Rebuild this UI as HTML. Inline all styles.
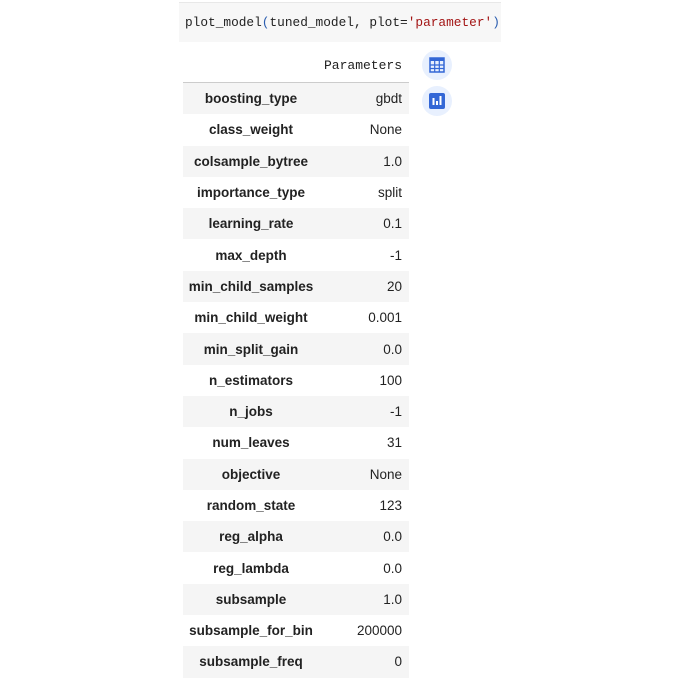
<!DOCTYPE html>
<html><head><style>
body{margin:0;width:680px;height:683px;background:#fff;position:relative;overflow:hidden;font-family:"Liberation Sans",Arial,sans-serif}
.code{position:absolute;left:179px;top:2px;width:322px;height:40px;background:#f7f7f7;border-top:1px solid #e8e8e8;font-family:"Liberation Mono",monospace;font-size:12.8px;line-height:40px;padding-left:6px;box-sizing:border-box;color:#222;white-space:nowrap}
.b{color:#2a5db0}.s{color:#a31515}
table{position:absolute;left:183px;top:48px;width:226px;border-collapse:collapse;font-size:13.5px;color:#222}
th{height:32px;font-family:"Liberation Mono",monospace;font-weight:normal;text-align:right;padding-right:7px;border-bottom:1px solid #ccc;font-size:13px}
td{height:31.3px;padding:0}
td.k{font-weight:bold;text-align:center;width:136px}
td.v{text-align:right;padding-right:7px}
tr:nth-child(even) td{background:#f5f5f5}
.ic{position:absolute;left:422px;width:30px;height:30px;border-radius:50%;background:#e8f0fe}
</style></head><body>
<div class="code">plot_model<span class="b">(</span>tuned_model, plot=<span class="s">'parameter'</span><span class="b">)</span></div>
<div class="ic" style="top:50px"><svg width="30" height="30"><rect x="8" y="8" width="14" height="14" fill="none" stroke="#3367d6" stroke-width="1.5"/><rect x="8" y="8" width="14" height="3" fill="#3367d6"/><path d="M8 15h14M8 18.5h14M12.7 11v11M17.3 11v11" stroke="#3367d6" stroke-width="1.2"/></svg></div>
<div class="ic" style="top:86px"><svg width="30" height="30"><rect x="7" y="7" width="16" height="16" rx="2" fill="#3367d6"/><path d="M11.5 12v7M15 15v4M18.5 10v9" stroke="#fff" stroke-width="2"/></svg></div>
<table>
<tr><th></th><th>Parameters</th></tr>
<tr><td class="k">boosting_type</td><td class="v">gbdt</td></tr>
<tr><td class="k">class_weight</td><td class="v">None</td></tr>
<tr><td class="k">colsample_bytree</td><td class="v">1.0</td></tr>
<tr><td class="k">importance_type</td><td class="v">split</td></tr>
<tr><td class="k">learning_rate</td><td class="v">0.1</td></tr>
<tr><td class="k">max_depth</td><td class="v">-1</td></tr>
<tr><td class="k">min_child_samples</td><td class="v">20</td></tr>
<tr><td class="k">min_child_weight</td><td class="v">0.001</td></tr>
<tr><td class="k">min_split_gain</td><td class="v">0.0</td></tr>
<tr><td class="k">n_estimators</td><td class="v">100</td></tr>
<tr><td class="k">n_jobs</td><td class="v">-1</td></tr>
<tr><td class="k">num_leaves</td><td class="v">31</td></tr>
<tr><td class="k">objective</td><td class="v">None</td></tr>
<tr><td class="k">random_state</td><td class="v">123</td></tr>
<tr><td class="k">reg_alpha</td><td class="v">0.0</td></tr>
<tr><td class="k">reg_lambda</td><td class="v">0.0</td></tr>
<tr><td class="k">subsample</td><td class="v">1.0</td></tr>
<tr><td class="k">subsample_for_bin</td><td class="v">200000</td></tr>
<tr><td class="k">subsample_freq</td><td class="v">0</td></tr>
</table>
</body></html>
